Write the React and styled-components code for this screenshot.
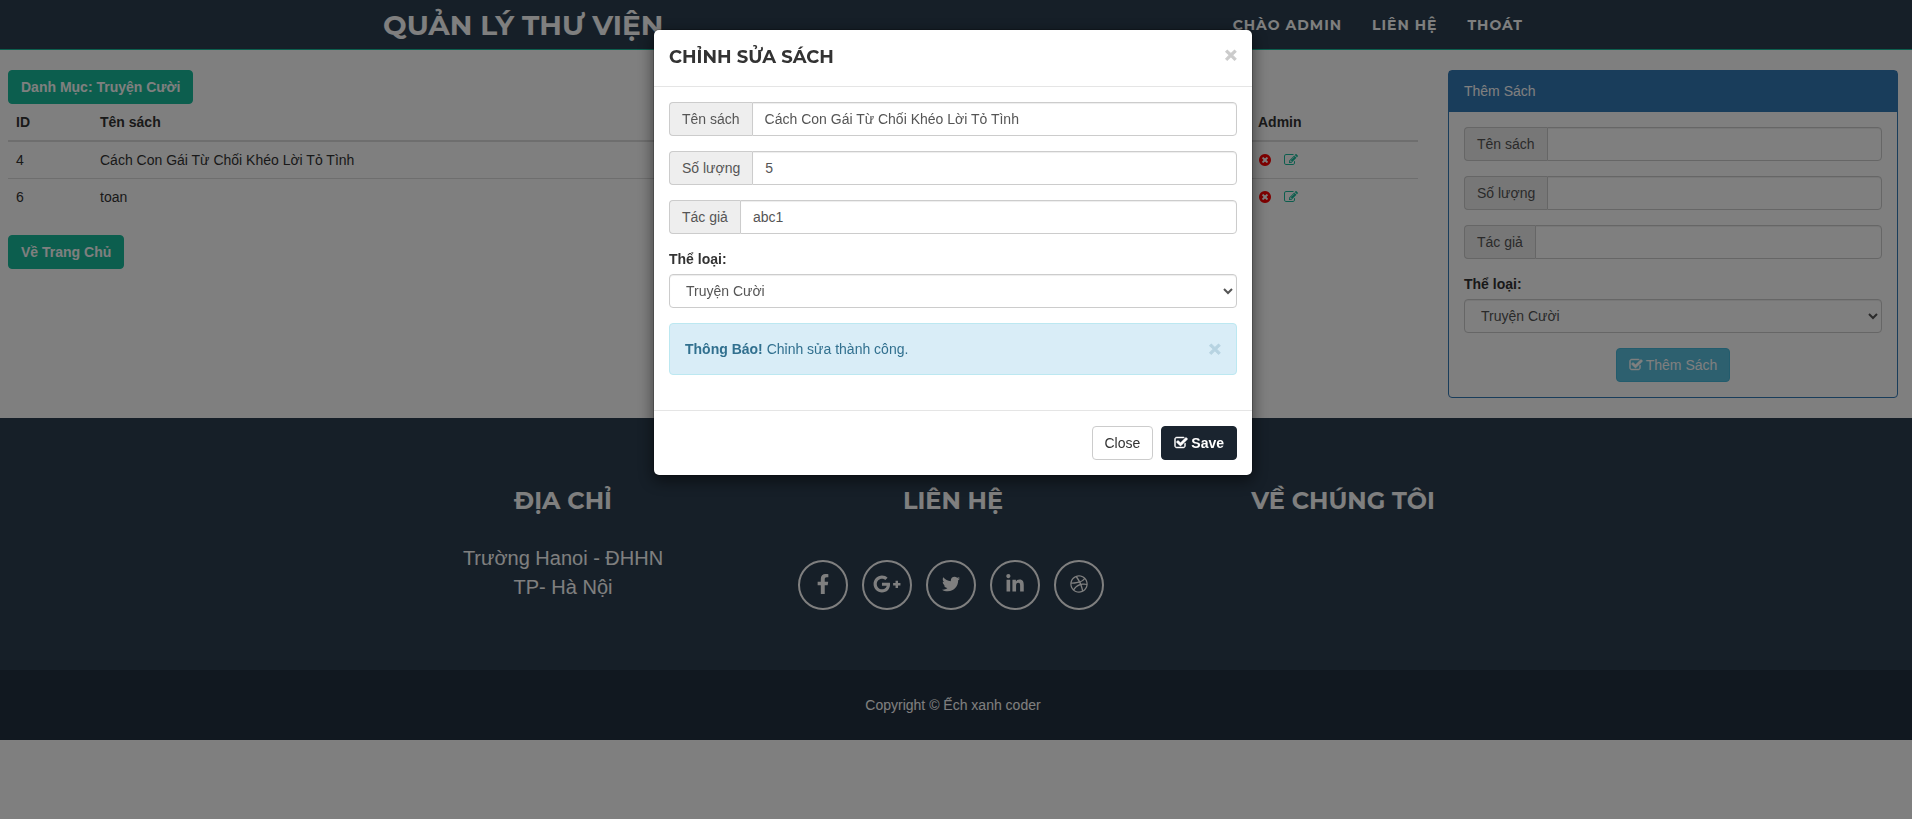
import { useState } from "react";
import styled, { createGlobalStyle } from "styled-components";
import {
  FaFacebookF,
  FaGooglePlusG,
  FaTwitter,
  FaLinkedinIn,
  FaDribbble,
} from "react-icons/fa";

const GlobalStyle = createGlobalStyle`
  * {
    box-sizing: border-box;
  }
  body {
    margin: 0;
    background: #fff;
    color: #333;
    font-family: "Liberation Sans", Arial, sans-serif;
    font-size: 14px;
    line-height: 20px;
  }
  button, input, select {
    font-family: inherit;
    font-size: inherit;
    line-height: inherit;
  }
  h1, h3, h4, p, ul {
    margin: 0;
  }
`;

/* ---------- header ---------- */
const Navbar = styled.header`
  background: #2c3e50;
  border-bottom: 1px solid #18bc9c;
  padding-right: 6px;
`;
const Container = styled.div`
  max-width: 1170px;
  margin: 0 auto;
`;
const NavInner = styled(Container)`
  height: 49px;
  padding: 0 15px;
  display: flex;
  align-items: center;
  justify-content: space-between;
`;
const Brand = styled.a`
  color: #fff;
  font-family: Montserrat, Inter, sans-serif;
  font-size: 28px;
  font-weight: 700;
  text-decoration: none;
  white-space: nowrap;
`;
const Menu = styled.nav`
  display: flex;
  gap: 30px;
`;
const MenuLink = styled.a`
  color: #fff;
  font-family: Montserrat, Inter, sans-serif;
  font-size: 14px;
  font-weight: 700;
  letter-spacing: 1px;
  text-decoration: none;
`;

/* ---------- content ---------- */
const Main = styled.main`
  display: grid;
  grid-template-columns: minmax(0, 47fr) minmax(0, 15fr);
  gap: 30px;
  align-items: start;
  padding: 20px 14px 20px 8px;
`;
const Button = styled.button`
  height: 34px;
  padding: 6px 12px;
  border: 1px solid ${(p) => p.$border || p.$bg};
  border-radius: 4px;
  background: ${(p) => p.$bg};
  color: ${(p) => p.$color || "#fff"};
  font-weight: ${(p) => (p.$bold ? 700 : 400)};
  cursor: pointer;
  white-space: nowrap;
`;
const Table = styled.table`
  width: 100%;
  margin-bottom: 20px;
  border-collapse: collapse;
  table-layout: fixed;
  th, td {
    padding: 8px;
    text-align: left;
  }
  th {
    border-bottom: 2px solid #ddd;
  }
  tbody tr + tr td {
    border-top: 1px solid #ddd;
  }
`;
const Col = styled.col`
  width: ${(p) => p.$width};
`;
const Actions = styled.div`
  display: flex;
  align-items: center;
  gap: 12px;
  height: 20px;
`;
const IconButton = styled.button`
  display: flex;
  padding: 0;
  border: none;
  background: none;
  color: ${(p) => p.$color};
  cursor: pointer;
`;
const Svg = styled.svg`
  width: 14px;
  height: 14px;
  fill: currentColor;
`;

/* ---------- panel + form ---------- */
const Panel = styled.section`
  border: 1px solid #337ab7;
  border-radius: 4px;
`;
const PanelHeading = styled.div`
  padding: 10px 15px 11px;
  background: #337ab7;
  color: #fff;
`;
const PanelBody = styled.form`
  display: flex;
  flex-direction: column;
  gap: 15px;
  padding: 15px;
`;
const InputGroup = styled.div`
  display: flex;
  height: 34px;
`;
const Addon = styled.label`
  padding: 6px 12px;
  background: #eee;
  border: 1px solid #ccc;
  border-right: none;
  border-radius: 4px 0 0 4px;
  color: #555;
  white-space: nowrap;
`;
const Input = styled.input`
  flex: 1;
  min-width: 0;
  padding: 6px 12px;
  border: 1px solid #ccc;
  border-radius: 0 4px 4px 0;
  background: #fff;
  color: #555;
  box-shadow: inset 0 1px 1px rgba(0, 0, 0, 0.075);
`;
const SelectGroup = styled.div`
  display: flex;
  flex-direction: column;
  gap: 5px;
`;
const Label = styled.label`
  font-weight: 700;
`;
const Select = styled.select`
  width: 100%;
  height: 34px;
  padding: 6px 12px;
  border: 1px solid #ccc;
  border-radius: 4px;
  background: #fff;
  color: #555;
  box-shadow: inset 0 1px 1px rgba(0, 0, 0, 0.075);
`;
const Center = styled.div`
  text-align: center;
`;
const IconLabel = styled.span`
  display: inline-flex;
  align-items: center;
  gap: 3px;
`;

/* ---------- footer ---------- */
const FooterAbove = styled.div`
  background: #2c3e50;
  color: #fff;
  padding: 69px 6px 60px 0;
`;
const FooterGrid = styled(Container)`
  display: grid;
  grid-template-columns: repeat(3, 1fr);
  text-align: center;
`;
const FooterTitle = styled.h3`
  margin-bottom: ${(p) => p.$gap || "29px"};
  font-family: Montserrat, Inter, sans-serif;
  font-size: 24px;
  font-weight: 700;
  line-height: 28px;
`;
const Address = styled.p`
  font-size: 20px;
  line-height: 29px;
`;
const Socials = styled.ul`
  display: flex;
  justify-content: center;
  gap: 14px;
  padding: 0 4px 0 0;
  list-style: none;
`;
const SocialLink = styled.a`
  display: flex;
  align-items: center;
  justify-content: center;
  width: 50px;
  height: 50px;
  padding-bottom: 2px;
  border: 2px solid #fff;
  border-radius: 50%;
  color: #fff;
  svg {
    width: auto;
    height: ${(p) => p.$size};
    flex-shrink: 0;
  }
`;
const FooterBelow = styled.div`
  padding: 25px 6px 25px 0;
  background: #233140;
  color: #fff;
  text-align: center;
`;

/* ---------- modal ---------- */
const Backdrop = styled.div`
  position: fixed;
  inset: 0;
  background: rgba(0, 0, 0, 0.5);
`;
const ModalLayer = styled.div`
  position: fixed;
  inset: 0;
  overflow: auto;
  padding: 29px 6px 29px 0;
`;
const Dialog = styled.div`
  max-width: 600px;
  margin: 0 auto;
  border: 1px solid rgba(0, 0, 0, 0.2);
  border-radius: 6px;
  background: #fff;
  background-clip: padding-box;
  box-shadow: 0 5px 15px rgba(0, 0, 0, 0.5);
`;
const DialogHeader = styled.div`
  display: flex;
  align-items: flex-start;
  justify-content: space-between;
  padding: 15px;
  border-bottom: 1px solid #e5e5e5;
`;
const DialogTitle = styled.h4`
  padding-bottom: 2px;
  font-family: Montserrat, Inter, sans-serif;
  font-size: 18px;
  font-weight: 700;
  line-height: 24px;
`;
const Close = styled.button`
  height: 20px;
  padding: 0;
  border: none;
  background: none;
  color: #000;
  font-size: 21px;
  font-weight: 700;
  line-height: 16px;
  text-shadow: 0 1px 0 #fff;
  -webkit-text-stroke: 1px #000;
  opacity: 0.2;
  cursor: pointer;
`;
const DialogBody = styled.form`
  display: flex;
  flex-direction: column;
  gap: 15px;
  padding: 15px 15px 35px;
`;
const Alert = styled.div`
  display: flex;
  justify-content: space-between;
  padding: 15px;
  border: 1px solid #bce8f1;
  border-radius: 4px;
  background: #d9edf7;
  color: #31708f;
  ${Close} {
    color: #31708f;
    -webkit-text-stroke-color: #31708f;
  }
`;
const DialogFooter = styled.div`
  display: flex;
  justify-content: flex-end;
  gap: 8px;
  padding: 15px;
  border-top: 1px solid #e5e5e5;
`;

const RemoveIcon = () => (
  <Svg viewBox="0 0 1792 1792">
    <path d="M1277 1122q0-26-19-45l-181-181 181-181q19-19 19-45 0-27-19-46l-90-90q-19-19-46-19-26 0-45 19l-181 181-181-181q-19-19-45-19-27 0-46 19l-90 90q-19 19-19 46 0 26 19 45l181 181-181 181q-19 19-19 45 0 27 19 46l90 90q19 19 46 19 26 0 45-19l181-181 181 181q19 19 45 19 27 0 46-19l90-90q19-19 19-46zm387-226q0 209-103 385.5t-279.5 279.5-385.5 103-385.5-103-279.5-279.5-103-385.5 103-385.5 279.5-279.5 385.5-103 385.5 103 279.5 279.5 103 385.5z" />
  </Svg>
);

const EditIcon = () => (
  <Svg viewBox="0 0 1792 1792">
    <path d="M888 1184l116-116-152-152-116 116v56h96v96h56zm440-720q-16-16-33 1l-350 350q-17 17-1 33t33-1l350-350q17-17 1-33zm80 594v190q0 119-84.5 203.5t-203.5 84.5h-832q-119 0-203.5-84.5t-84.5-203.5v-832q0-119 84.5-203.5t203.5-84.5h832q63 0 117 25 15 7 18 23 3 17-9 29l-49 49q-14 14-32 8-23-6-45-6h-832q-66 0-113 47t-47 113v832q0 66 47 113t113 47h832q66 0 113-47t47-113v-126q0-13 9-22l64-64q15-15 35-7t20 29zm-96-738l288 288-672 672h-288v-288zm444 132l-92 92-288-288 92-92q28-28 68-28t68 28l152 152q28 28 28 68t-28 68z" />
  </Svg>
);

const CheckIcon = () => (
  <Svg viewBox="0 0 1792 1792">
    <path
      stroke="currentColor"
      strokeWidth="60"
      d="M1472 930v318q0 119-84.5 203.5t-203.5 84.5h-832q-119 0-203.5-84.5t-84.5-203.5v-832q0-119 84.5-203.5t203.5-84.5h832q63 0 117 25 15 7 18 23 3 17-9 29l-49 49q-10 10-23 10-3 0-9-2-23-6-45-6h-832q-66 0-113 47t-47 113v832q0 66 47 113t113 47h832q66 0 113-47t47-113v-254q0-13 9-22l64-64q10-10 23-10 6 0 12 3 20 8 20 29zm231-489l-814 814q-24 24-57 24t-57-24l-430-430q-24-24-24-57t24-57l110-110q24-24 57-24t57 24l263 263 647-647q24-24 57-24t57 24l110 110q24 24 24 57t-24 57z"
    />
  </Svg>
);

const books = [
  { id: 4, name: "Cách Con Gái Từ Chối Khéo Lời Tỏ Tình" },
  { id: 6, name: "toan" },
];

const socials = [
  { name: "Facebook", icon: FaFacebookF, size: "20px" },
  { name: "Google Plus", icon: FaGooglePlusG, size: "28px" },
  { name: "Twitter", icon: FaTwitter, size: "18px" },
  { name: "LinkedIn", icon: FaLinkedinIn, size: "20px" },
  { name: "Dribbble", icon: FaDribbble, size: "18px" },
];

const BookFields = ({ prefix, name = "", amount = "", author = "" }) => (
  <>
    <InputGroup>
      <Addon htmlFor={`${prefix}-name`}>Tên sách</Addon>
      <Input id={`${prefix}-name`} defaultValue={name} />
    </InputGroup>
    <InputGroup>
      <Addon htmlFor={`${prefix}-amount`}>Số lượng</Addon>
      <Input id={`${prefix}-amount`} type="number" defaultValue={amount} />
    </InputGroup>
    <InputGroup>
      <Addon htmlFor={`${prefix}-author`}>Tác giả</Addon>
      <Input id={`${prefix}-author`} defaultValue={author} />
    </InputGroup>
    <SelectGroup>
      <Label htmlFor={`${prefix}-type`}>Thể loại:</Label>
      <Select id={`${prefix}-type`}>
        <option>Truyện Cười</option>
      </Select>
    </SelectGroup>
  </>
);

const EditModal = ({ onClose }) => {
  const [saved, setSaved] = useState(true);
  return (
    <>
      <Backdrop />
      <ModalLayer>
        <Dialog role="dialog" aria-labelledby="edit-title">
          <DialogHeader>
            <DialogTitle id="edit-title">CHỈNH SỬA SÁCH</DialogTitle>
            <Close type="button" aria-label="Close" onClick={onClose}>
              ×
            </Close>
          </DialogHeader>
          <DialogBody>
            <BookFields
              prefix="edit"
              name="Cách Con Gái Từ Chối Khéo Lời Tỏ Tình"
              amount="5"
              author="abc1"
            />
            {saved && (
              <Alert role="alert">
                <span>
                  <b>Thông Báo!</b> Chỉnh sửa thành công.
                </span>
                <Close
                  type="button"
                  aria-label="Close"
                  onClick={() => setSaved(false)}
                >
                  ×
                </Close>
              </Alert>
            )}
          </DialogBody>
          <DialogFooter>
            <Button
              type="button"
              $bg="#fff"
              $border="#ccc"
              $color="#333"
              onClick={onClose}
            >
              Close
            </Button>
            <Button
              type="button"
              $bg="#1a242f"
              $bold
              onClick={() => setSaved(true)}
            >
              <IconLabel>
                <CheckIcon /> Save
              </IconLabel>
            </Button>
          </DialogFooter>
        </Dialog>
      </ModalLayer>
    </>
  );
};

const App = () => {
  const [open, setOpen] = useState(true);

  return (
    <>
      <GlobalStyle />
      <Navbar>
        <NavInner>
          <Brand href="#">QUẢN LÝ THƯ VIỆN</Brand>
          <Menu>
            <MenuLink href="#">CHÀO ADMIN</MenuLink>
            <MenuLink href="#">LIÊN HỆ</MenuLink>
            <MenuLink href="#">THOÁT</MenuLink>
          </Menu>
        </NavInner>
      </Navbar>

      <Main>
        <div>
          <Button type="button" $bg="#18bc9c" $bold>
            Danh Mục: Truyện Cười
          </Button>
          <Table>
            <colgroup>
              <Col $width="84px" />
              <Col />
              <Col $width="168px" />
            </colgroup>
            <thead>
              <tr>
                <th>ID</th>
                <th>Tên sách</th>
                <th>Admin</th>
              </tr>
            </thead>
            <tbody>
              {books.map((book) => (
                <tr key={book.id}>
                  <td>{book.id}</td>
                  <td>{book.name}</td>
                  <td>
                    <Actions>
                      <IconButton $color="#f00" aria-label="Xóa">
                        <RemoveIcon />
                      </IconButton>
                      <IconButton
                        $color="#18bc9c"
                        aria-label="Sửa"
                        onClick={() => setOpen(true)}
                      >
                        <EditIcon />
                      </IconButton>
                    </Actions>
                  </td>
                </tr>
              ))}
            </tbody>
          </Table>
          <Button type="button" $bg="#18bc9c" $bold>
            Về Trang Chủ
          </Button>
        </div>

        <Panel>
          <PanelHeading>Thêm Sách</PanelHeading>
          <PanelBody>
            <BookFields prefix="add" />
            <Center>
              <Button type="button" $bg="#5bc0de" $border="#46b8da">
                <IconLabel>
                  <CheckIcon /> Thêm Sách
                </IconLabel>
              </Button>
            </Center>
          </PanelBody>
        </Panel>
      </Main>

      <footer>
        <FooterAbove>
          <FooterGrid>
            <div>
              <FooterTitle>ĐỊA CHỈ</FooterTitle>
              <Address>
                Trường Hanoi - ĐHHN
                <br />
                TP- Hà Nội
              </Address>
            </div>
            <div>
              <FooterTitle $gap="45px">LIÊN HỆ</FooterTitle>
              <Socials>
                {socials.map(({ name, icon: Icon, size }) => (
                  <li key={name}>
                    <SocialLink href="#" aria-label={name} $size={size}>
                      <Icon />
                    </SocialLink>
                  </li>
                ))}
              </Socials>
            </div>
            <div>
              <FooterTitle>VỀ CHÚNG TÔI</FooterTitle>
            </div>
          </FooterGrid>
        </FooterAbove>
        <FooterBelow>Copyright © Ếch xanh coder</FooterBelow>
      </footer>

      {open && <EditModal onClose={() => setOpen(false)} />}
    </>
  );
};

export default App;
